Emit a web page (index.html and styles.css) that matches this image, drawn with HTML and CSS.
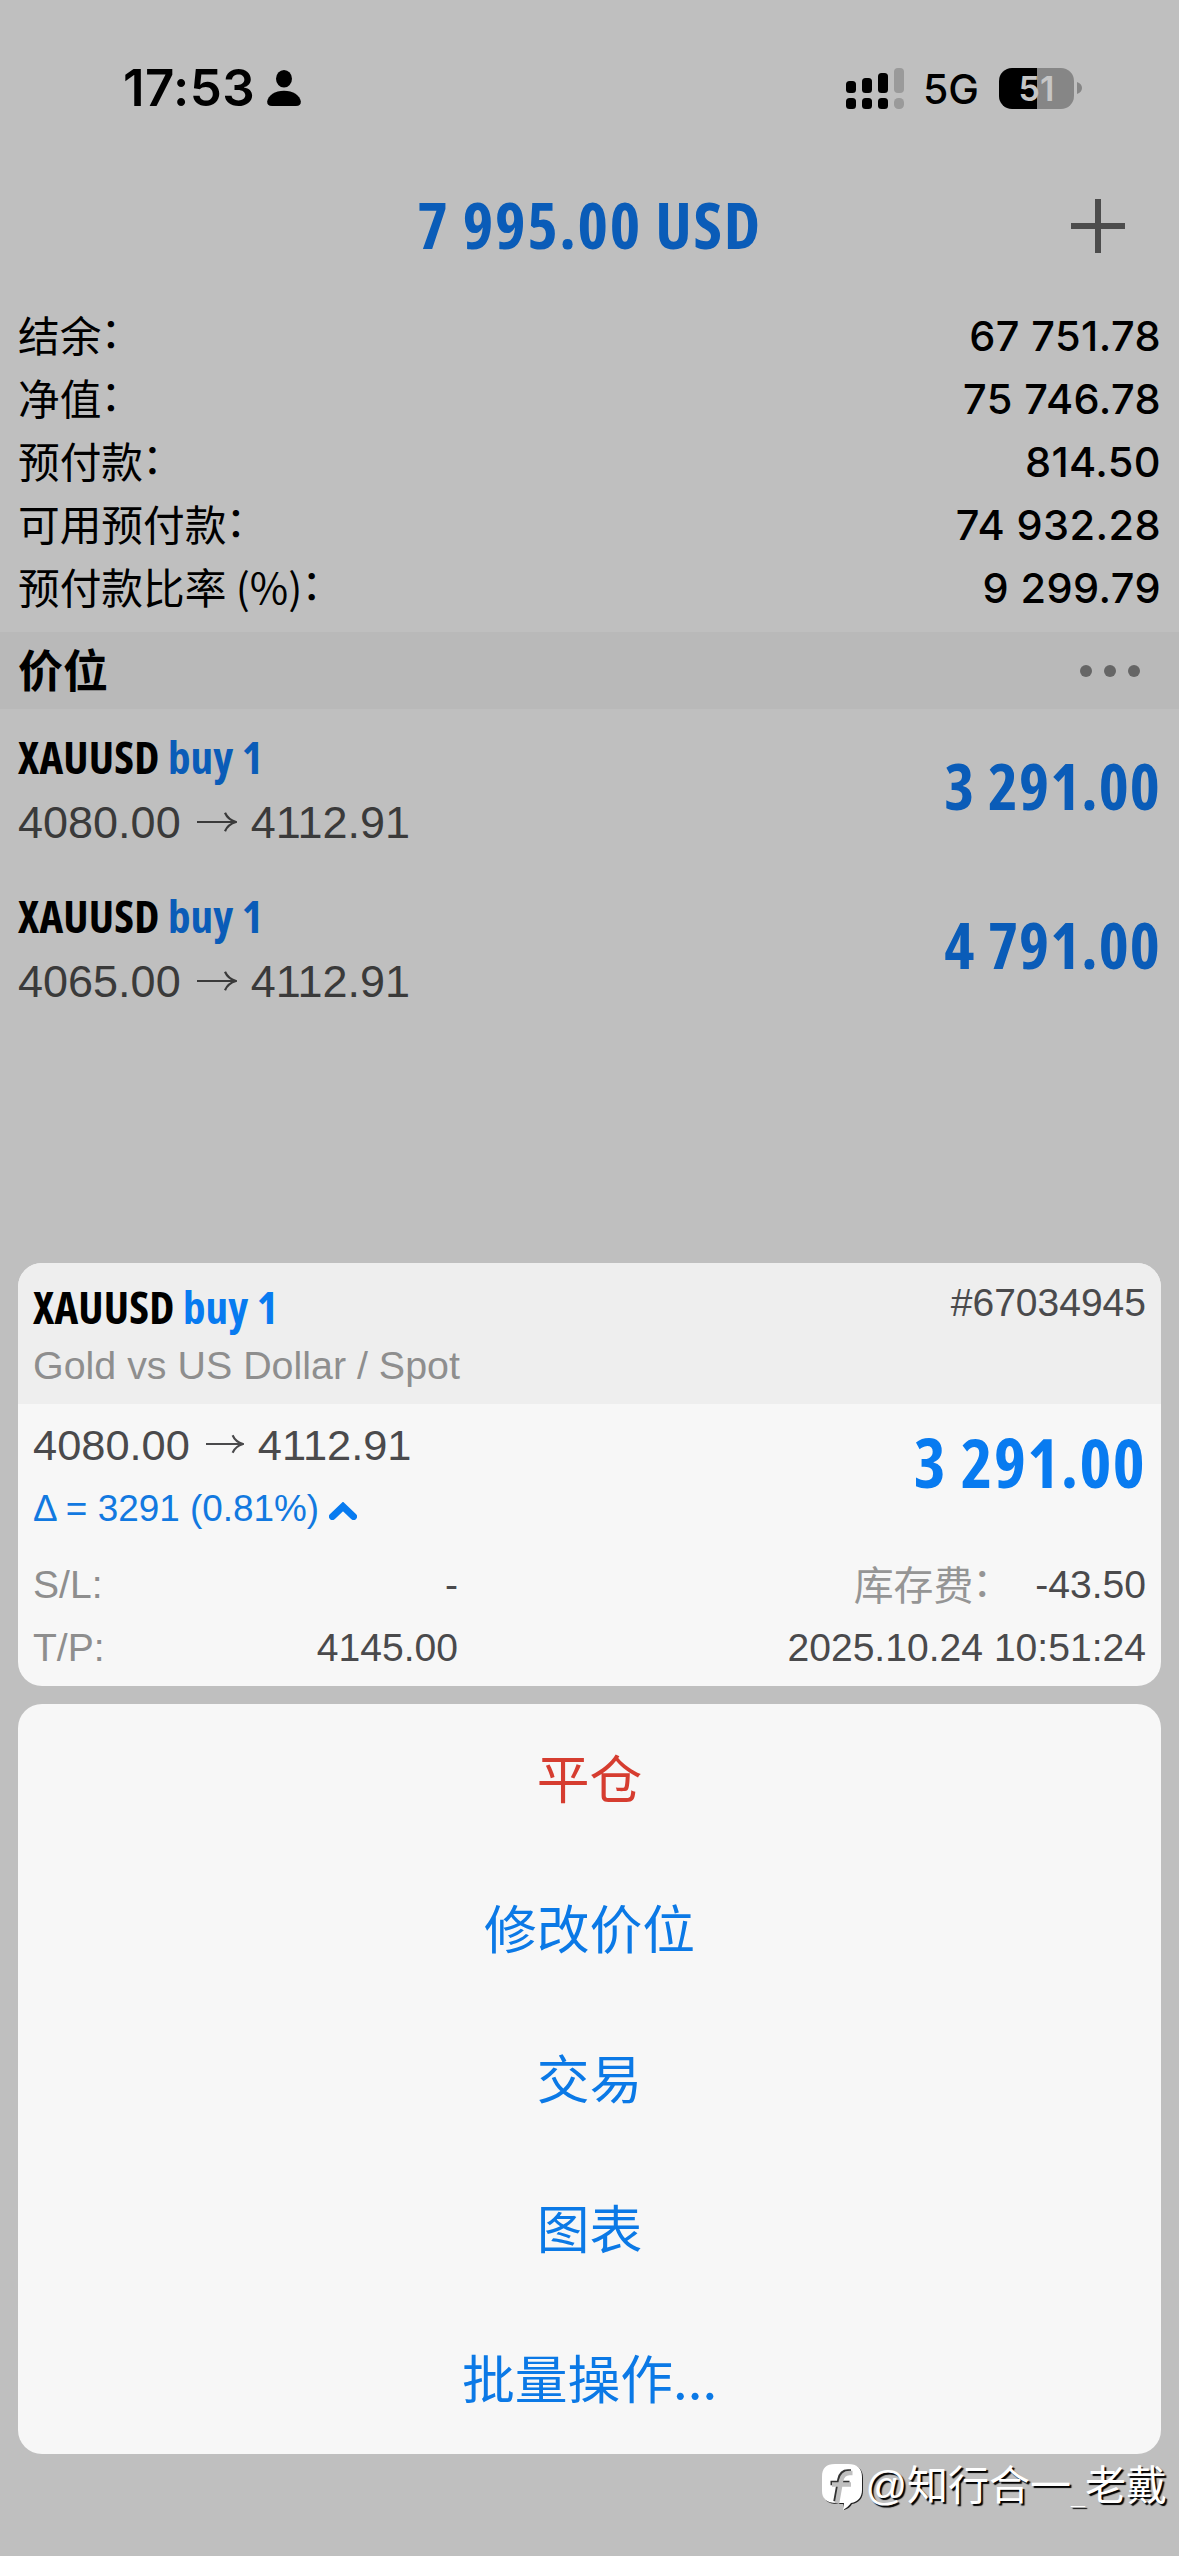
FILE: index.html
```html
<!DOCTYPE html>
<html lang="zh-CN">
<head>
<meta charset="utf-8">
<title>价位</title>
<link rel="stylesheet" href="styles.css">
</head>
<body>
<div class="screen">
  <div class="status">
    <span class="time">17:53</span>
    <svg class="person" width="34" height="36" viewBox="0 0 34 36"><ellipse cx="17" cy="8.8" rx="8" ry="8.8"/><path d="M5 36C1.5 36 0 34.300 .2 31.500 1 25.500 8 20.800 17 20.800s16 4.700 16.800 10.700c.2 2.800-1.300 4.500-4.800 4.500z"/></svg>
    <svg class="signal" width="58" height="41" viewBox="0 0 58 41">
      <rect x="0" y="13" width="10" height="12" rx="3.500"/><rect x="16" y="10" width="10" height="15" rx="3.500"/><rect x="32" y="5" width="10" height="20" rx="3.500"/><rect class="off" x="48" y="0" width="10" height="25" rx="4"/>
      <rect x="0" y="30" width="10" height="11" rx="3.500"/><rect x="16" y="30" width="10" height="11" rx="3.500"/><rect x="32" y="30" width="10" height="11" rx="3.500"/><rect class="off" x="48" y="30" width="10" height="11" rx="4.500"/>
    </svg>
    <span class="network">5G</span>
    <span class="battery">51</span>
    <svg class="nub" width="5" height="12" viewBox="0 0 5 12"><path d="M0 0c3 1 5 3 5 6s-2 5-5 6z"/></svg>
  </div>

  <header class="header">
    <h1 class="total">7 995.00 USD</h1>
    <svg class="plus" width="54" height="54" viewBox="0 0 54 54"><path d="M27 0v54M0 27h54"/></svg>
  </header>

  <dl class="metrics">
    <div class="metric"><dt>结余<span class="colon">：</span></dt><dd>67 751.78</dd></div>
    <div class="metric"><dt>净值<span class="colon">：</span></dt><dd>75 746.78</dd></div>
    <div class="metric"><dt>预付款<span class="colon">：</span></dt><dd>814.50</dd></div>
    <div class="metric"><dt>可用预付款<span class="colon">：</span></dt><dd>74 932.28</dd></div>
    <div class="metric"><dt>预付款比率 (%)<span class="colon">：</span></dt><dd>9 299.79</dd></div>
  </dl>

  <div class="section">
    <h2 class="section-title">价位</h2>
    <svg width="60" height="12" viewBox="0 0 60 12"><circle cx="6" cy="6" r="6"/><circle cx="30" cy="6" r="6"/><circle cx="54" cy="6" r="6"/></svg>
  </div>

  <div class="position">
    <div>
      <div class="symbol">XAUUSD <span class="side">buy 1</span></div>
      <div class="prices">4080.00<svg class="arrow" width="40" height="20" viewBox="0 0 40 20"><path d="M0 10h39M28 .8q3 7 11 9.200q-8 2.200-11 9.200"/></svg>4112.91</div>
    </div>
    <div class="amount">3 291.00</div>
  </div>
  <div class="position">
    <div>
      <div class="symbol">XAUUSD <span class="side">buy 1</span></div>
      <div class="prices">4065.00<svg class="arrow" width="40" height="20" viewBox="0 0 40 20"><path d="M0 10h39M28 .8q3 7 11 9.200q-8 2.200-11 9.200"/></svg>4112.91</div>
    </div>
    <div class="amount">4 791.00</div>
  </div>

  <div class="sheet">
    <div class="card">
      <div class="card-head">
        <div>
          <div class="symbol">XAUUSD <span class="side">buy 1</span></div>
          <div class="desc">Gold vs US Dollar / Spot</div>
        </div>
        <div class="ticket">#67034945</div>
      </div>
      <div class="card-body">
        <div class="summary">
          <div>
            <div class="prices">4080.00<svg class="arrow" width="38" height="20" viewBox="0 0 40 20"><path d="M0 10h39M28 .8q3 7 11 9.200q-8 2.200-11 9.200"/></svg>4112.91</div>
            <div class="delta">Δ = 3291 (0.81%)<svg class="chevron" width="28" height="18" viewBox="0 0 28 18"><path d="M3.500 14.500L14 4.500l10.500 10"/></svg></div>
          </div>
          <div class="amount">3 291.00</div>
        </div>
        <div class="details">
          <span class="label">S/L:</span><span class="value">-</span>
          <span class="label swap">库存费<span class="colon">：</span></span><span class="value">-43.50</span>
          <span class="label">T/P:</span><span class="value">4145.00</span>
          <span class="value date">2025.10.24 10:51:24</span>
        </div>
      </div>
    </div>
    <div class="actions">
      <div class="action danger">平仓</div>
      <div class="action">修改价位</div>
      <div class="action">交易</div>
      <div class="action">图表</div>
      <div class="action">批量操作...</div>
    </div>
  </div>

  <div class="watermark">
    <svg width="42" height="46" viewBox="0 0 42 46"><path class="shade" d="M14 1h13c9 0 14 4 14 13v13c0 7-4 12-11 13-1.500 3-4 5-8 6l-1-6h-6C6 40 1 36 1 28V14C1 5 5 1 14 1z"/><path class="bubble" d="M13 0h13c9 0 14 4 14 13v13c0 7-4 12-11 13-2 3-5 5-8 7l1-7h-8C5 39 0 35 0 27V13C0 4 4 0 13 0z"/><path class="mark-edge" d="M29 7.500h-3c-5 0-7.500 3-8.500 8l-4 22M8.500 19h19"/><path class="mark" d="M30.500 9h-3c-5 0-7.500 3-8.500 8l-4 22.500M10 20.500h19"/></svg>
    <span class="wm-text"><span class="wm-at">@</span>知行合一<span class="wm-bar">_</span>老戴</span>
  </div>
</div>
</body>
</html>
```
FILE: styles.css
```css
* { box-sizing: border-box; margin: 0; padding: 0; }

body { background: #bfbfbf; }

.screen {
  position: relative;
  display: flex;
  flex-direction: column;
  width: 1179px;
  height: 2556px;
  overflow: hidden;
  background: #bfbfbf;
  color: #000;
  font-family: "Liberation Sans", "Noto Sans CJK SC", sans-serif;
}

/* Status bar */
.status {
  display: flex;
  align-items: center;
  height: 176px;
  padding: 0 97px 0 123px;
  font-family: Inter, sans-serif;
}
.time { font-size: 51px; font-weight: 600; line-height: 60px; letter-spacing: .4px; }
.person { margin-left: 12px; }
.signal { margin-left: auto; }
.off { fill: #9a9a9a; }
.network { margin: 2px 20px 0 19px; font-size: 41px; font-weight: 500; line-height: 50px; }
.battery {
  width: 75px;
  height: 41px;
  border-radius: 13px;
  background: linear-gradient(90deg, #000 38px, #868686 38px);
  color: #c6c6c6;
  font-size: 34px;
  font-weight: 600;
  line-height: 41px;
  text-align: center;
}
.nub { margin-left: 3px; fill: #868686; }

/* Account total */
.header {
  display: grid;
  grid-template-columns: 1fr auto 1fr;
  align-items: center;
  height: 100px;
  padding: 0 54px;
}
.total {
  grid-column: 2;
  padding-bottom: 5px;
  color: #0a5cb8;
  font: 700 65px/80px "Open Sans", sans-serif;
  font-stretch: 75%;
  letter-spacing: 1.700px;
}
.plus { justify-self: end; fill: none; stroke: #4c4c4c; stroke-width: 6; }

/* Account metrics */
.metrics { margin-top: 28px; padding: 0 18px; }
.metric { display: flex; justify-content: space-between; height: 63px; }
.metric dt { font: 400 41.700px/60px "Noto Sans CJK SC", sans-serif; }
.metric dd { font: 500 41.500px/64px Inter, sans-serif; letter-spacing: .4px; }
.colon { margin-left: -1px; line-height: 0; vertical-align: 4px; }

.section {
  display: flex;
  align-items: center;
  justify-content: space-between;
  height: 77px;
  margin-top: 13px;
  padding: 0 39px 0 18px;
  background: #b9b9b9;
  fill: #666;
}
.section-title { padding-bottom: 3px; font: 700 45px/60px "Noto Sans CJK SC", sans-serif; }

/* Positions */
.position {
  display: flex;
  justify-content: space-between;
  height: 159px;
  padding: 18px 18px 0;
}
.symbol { font: 700 45px/60px "Open Sans", sans-serif; font-stretch: 75%; letter-spacing: .200px; }
.side { color: #0a5cb8; }
.prices { display: flex; align-items: center; margin-top: 6px; color: #3a3a3a; font-size: 45px; line-height: 60px; }
.arrow { margin: 0 14px 2px 16px; fill: none; stroke: currentColor; stroke-width: 2.200; }
.amount {
  margin-top: 27px;
  color: #0a5cb8;
  font: 700 64px/64px "Open Sans", sans-serif;
  font-stretch: 75%;
  letter-spacing: 1.100px;
}

/* Bottom sheet */
.sheet { display: flex; flex-direction: column; gap: 18px; margin: auto 18px 102px; }
.card, .actions { border-radius: 24px; background: #f7f7f7; overflow: hidden; }
.card .side, .card .amount { color: #087bf0; }
.card .symbol, .card .prices { line-height: 50px; }
.card-head {
  display: flex;
  justify-content: space-between;
  height: 141px;
  padding: 19px 15px 0;
  background: #eee;
}
.desc { margin-top: 8px; color: #8e8e8e; font-size: 39.400px; line-height: 50px; }
.ticket { color: #4a4a4c; font-size: 39px; line-height: 42px; }

.card-body { height: 282px; padding: 16px 15px 0; color: #4a4a4c; }
.summary { display: flex; justify-content: space-between; }
.card .prices { margin-top: 0; color: #4a4a4c; font-size: 43.400px; }
.card .arrow { margin: 0 14px 2px 16px; }
.card .amount { margin-top: 8px; font-size: 68px; line-height: 68px; letter-spacing: 1.400px; }
.delta { display: flex; align-items: center; margin-top: 14px; color: #1279e0; font-size: 36.900px; line-height: 50px; }
.chevron { margin: 3px 0 0 10px; fill: none; stroke: #087bf0; stroke-width: 7; stroke-linecap: round; }

.details {
  display: grid;
  grid-template-columns: 110px 315px 1fr auto;
  margin-top: 19px;
  font-size: 39.100px;
  line-height: 63px;
}
.label { color: #8e8e8e; }
.value { text-align: right; }
.swap {
  padding-right: 23px;
  color: #959595;
  font: 400 39.900px/59px "Noto Sans CJK SC", sans-serif;
  text-align: right;
}
.date { grid-column: 3 / 5; }

.actions { height: 750px; }
.action {
  height: 150px;
  color: #0b79e6;
  font: 400 52.800px/145px "Noto Sans CJK SC", sans-serif;
  text-align: center;
}
.danger { color: #d63d30; }

/* Watermark over the bottom edge */
.watermark {
  position: absolute;
  right: 12px;
  bottom: 37px;
  display: flex;
  align-items: center;
  gap: 1px;
  color: #fff;
}
.shade { fill: #222; }
.bubble { fill: #fff; }
.mark, .mark-edge { fill: none; stroke: #bfbfbf; stroke-width: 4.500; }
.mark-edge { stroke: #333; }
.wm-text { padding-bottom: 4px; font: 400 41px/57px "Noto Sans CJK SC", sans-serif; text-shadow: 2px 2px 1px #000; white-space: nowrap; }
.wm-at { font-family: "Liberation Sans", sans-serif; }
.wm-bar { font: 700 25px/1 "Liberation Sans", sans-serif; vertical-align: -4px; }
```
